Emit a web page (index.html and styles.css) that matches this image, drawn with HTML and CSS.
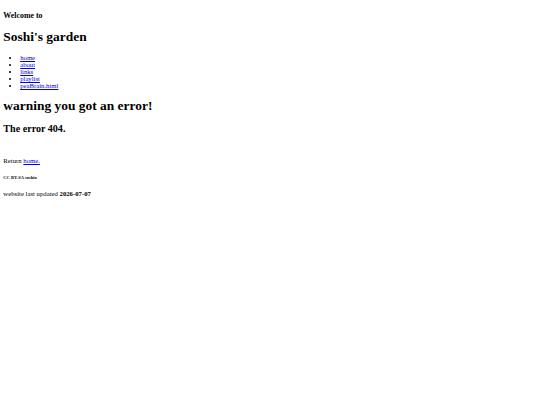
FILE: index.html
```html
<!DOCTYPE html>
<html lang="en">
<head>
<meta charset="utf-8">
<title>404</title>
<link rel="stylesheet" href="styles.css">
</head>
<body class="page">
<h3 class="welcome">Welcome to</h3>
<h1 class="title">Soshi's garden</h1>
<ul class="nav">
<li><a class="link" href="#">home</a></li>
<li><a class="link" href="#">about</a></li>
<li><a class="link" href="#">links</a></li>
<li><a class="link" href="#">playlist</a></li>
<li><a class="link" href="#">peaBrain.html</a></li>
</ul>
<h1 class="title">warning you got an error!</h1>
<h2 class="code">The error 404.</h2>
<div class="spacer"></div>
<p class="para">Return <a class="link" href="#">home.</a></p>
<h6 class="cc">CC BY-SA soshio</h6>
<p class="para">website last updated <b>2026-07-07</b></p>
</body>
</html>
```
FILE: styles.css
```css
.page {
  margin: 3.36px;
  font-family: "Liberation Serif", "Times New Roman", serif;
  font-size: 6.72px;
  color: #000;
  background: #fff;
}
.welcome { font-size: 7.86px; font-weight: bold; margin: 7.86px 0; }
.title { font-size: 13.44px; font-weight: bold; margin: 9px 0; }
.nav { margin: 6.72px 0; padding-left: 16.8px; list-style: disc; }
.code { font-size: 10.08px; font-weight: bold; margin: 8.37px 0; }
.spacer { height: 7.73px; }
.para { margin: 6.72px 0; }
.cc { font-size: 4.5px; font-weight: bold; margin: 10.5px 0; }
.link { color: #0000ee; text-decoration: underline; }
```
